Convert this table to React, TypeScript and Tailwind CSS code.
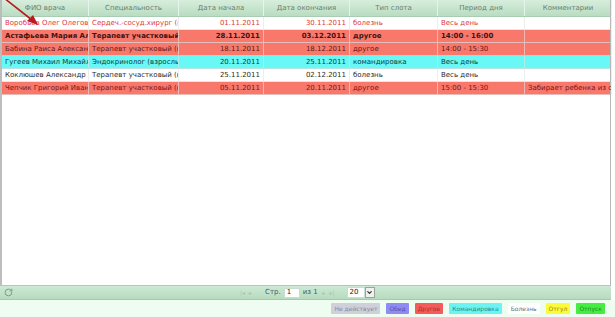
import { RotateCw, ChevronDown } from 'lucide-react';

type Row = {
    fio: string;
    spec: string;
    start: string;
    end: string;
    slot: string;
    period: string;
    comment: string;
    bg: string;
    text: string;
    bold?: boolean;
};

const rows: Row[] = [
    { fio: 'Воробьев Олег Олегович', spec: 'Сердеч.-сосуд.хирург (взр)', start: '01.11.2011', end: '30.11.2011', slot: 'болезнь', period: 'Весь день', comment: '', bg: 'bg-white', text: 'text-[#e0383a]' },
    { fio: 'Астафьева Мария Александровна', spec: 'Терапевт участковый (взр)', start: '28.11.2011', end: '03.12.2011', slot: 'другое', period: '14:00 - 16:00', comment: '', bg: 'bg-[#f8786c]', text: 'text-[#3e1412]', bold: true },
    { fio: 'Бабина Раиса Александровна', spec: 'Терапевт участковый (взр)', start: '18.11.2011', end: '18.12.2011', slot: 'другое', period: '14:00 - 15:30', comment: '', bg: 'bg-[#f8786c]', text: 'text-[#5a1a16]' },
    { fio: 'Гугеев Михаил Михайлович', spec: 'Эндокринолог (взрослый)', start: '20.11.2011', end: '25.11.2011', slot: 'командировка', period: 'Весь день', comment: '', bg: 'bg-[#68f8f6]', text: 'text-[#0c3c3c]' },
    { fio: 'Коклюшев Александр Андреевич', spec: 'Терапевт участковый (взр)', start: '25.11.2011', end: '02.12.2011', slot: 'болезнь', period: 'Весь день', comment: '', bg: 'bg-white', text: 'text-[#2a2a2a]' },
    { fio: 'Чепчик Григорий Иванович', spec: 'Терапевт участковый (взр)', start: '05.11.2011', end: '20.11.2011', slot: 'другое', period: '15:00 - 15:30', comment: 'Забирает ребенка из сада', bg: 'bg-[#f8786c]', text: 'text-[#7a1414]' },
];

const cols = [
    { title: 'ФИО врача', w: 'w-[87px]' },
    { title: 'Специальность', w: 'w-[90px]' },
    { title: 'Дата начала', w: 'w-[85px]' },
    { title: 'Дата окончания', w: 'w-[86px]' },
    { title: 'Тип слота', w: 'w-[88px]' },
    { title: 'Период дня', w: 'w-[87px]' },
    { title: 'Комментарии', w: 'w-[87px]' },
];

const legend = [
    { label: 'Не действует', cls: 'bg-[#cfd0da] text-[#8a8a98]' },
    { label: 'Обед', cls: 'bg-[#8e8cf4] text-[#5050b0]' },
    { label: 'Другое', cls: 'bg-[#f45c5c] text-[#b02a2a]' },
    { label: 'Командировка', cls: 'bg-[#6cf4f2] text-[#2a8a88]' },
    { label: 'Болезнь', cls: 'bg-white text-[#707070]' },
    { label: 'Отгул', cls: 'bg-[#fbfb3c] text-[#9a8a10]' },
    { label: 'Отпуск', cls: 'bg-[#44ec44] text-[#189018]' },
];

function Cell({ w, children, right }: { w: string; children?: React.ReactNode; right?: boolean }) {
    return (
        <div className={`${w} shrink-0 h-full px-[3px] flex items-center overflow-hidden whitespace-nowrap border-r border-[#e2e2e2]/60 ${right ? 'justify-end' : ''}`}>
            {children}
        </div>
    );
}

export default function App() {
    return (
        <div className="w-[615px] h-[317px] bg-white flex flex-col overflow-hidden relative text-[7px] leading-none" style={{ fontFamily: '"DejaVu Sans", Verdana, sans-serif' }}>
            {/* Grid */}
            <div className="flex-1 flex flex-col w-[611px] border-l-2 border-r border-[#b8b8b8] border-l-[#bdbdbd]">
                {/* Header */}
                <div className="h-[17px] flex bg-gradient-to-b from-[#d6eedb] to-[#b9dcc2] border-b border-[#a9cdb2] text-[#6b7d6f]">
                    {cols.map((c) => (
                        <div key={c.title} className={`${c.w} shrink-0 h-full flex items-center justify-center pt-[1px] border-r border-[#e6f4e9]`}>
                            {c.title}
                        </div>
                    ))}
                </div>

                {/* Rows */}
                {rows.map((r) => (
                    <div key={r.fio} className={`h-[13px] flex border-b border-[#dcdcdc]/70 ${r.bg} ${r.text} ${r.bold ? 'font-bold' : ''}`}>
                        <Cell w={cols[0].w}>{r.fio}</Cell>
                        <Cell w={cols[1].w}>{r.spec}</Cell>
                        <Cell w={cols[2].w} right>{r.start}</Cell>
                        <Cell w={cols[3].w} right>{r.end}</Cell>
                        <Cell w={cols[4].w}>{r.slot}</Cell>
                        <Cell w={cols[5].w}>{r.period}</Cell>
                        <Cell w={cols[6].w}>{r.comment}</Cell>
                    </div>
                ))}
            </div>

            {/* Pager */}
            <div className="h-[15px] w-[611px] flex items-center bg-gradient-to-b from-[#cde9d3] to-[#b7dbbf] border-t border-[#a9cfb3] border-b border-b-[#a4c9ad] text-[#4a5a66]">
                <RotateCw className="w-[9px] h-[9px] ml-[4px] text-[#7a9a80]" strokeWidth={2.5} />
                <div className="ml-[227px] w-[18px] flex items-center gap-[3px] text-[#a9c6ae]">
                    <span className="text-[6px]">|◂</span>
                    <span className="text-[6px]">◂</span>
                </div>
                <span className="ml-[7px]">Стр.</span>
                <div className="ml-[3px] w-[16px] h-[10px] bg-white border border-[#c9dccd] flex items-center pl-[2px] text-[#222]">1</div>
                <span className="ml-[3px]">из 1</span>
                <div className="ml-[5px] w-[20px] flex items-center gap-[4px] text-[#a9c6ae]">
                    <span className="text-[6px]">▸</span>
                    <span className="text-[6px]">▸|</span>
                </div>
                <div className="ml-[4px] w-[18px] h-[11px] bg-white border border-[#c9dccd] flex items-center pl-[2px] text-[#222]">20</div>
                <div className="w-[10px] h-[11px] bg-[#eef2ee] border border-[#9aa39c] flex items-center justify-center">
                    <ChevronDown className="w-[7px] h-[7px] text-[#333]" strokeWidth={4} />
                </div>
            </div>

            {/* Legend */}
            <div className="h-[17px] bg-[#effcf1] flex items-center justify-end pr-[10px] gap-[6px] text-[6px]">
                {legend.map((l) => (
                    <span key={l.label} className={`px-[3px] h-[11px] flex items-center rounded-[1px] ${l.cls}`}>
                        {l.label}
                    </span>
                ))}
            </div>

            {/* Arrow */}
            <svg className="absolute left-0 top-0 pointer-events-none" width="45" height="32" viewBox="0 0 45 32">
                <line x1="4" y1="-2" x2="32" y2="20" stroke="#b81c1c" strokeWidth="1.6" />
                <polygon points="38,25 27,21 33,15" fill="#b81c1c" />
            </svg>
        </div>
    );
}
